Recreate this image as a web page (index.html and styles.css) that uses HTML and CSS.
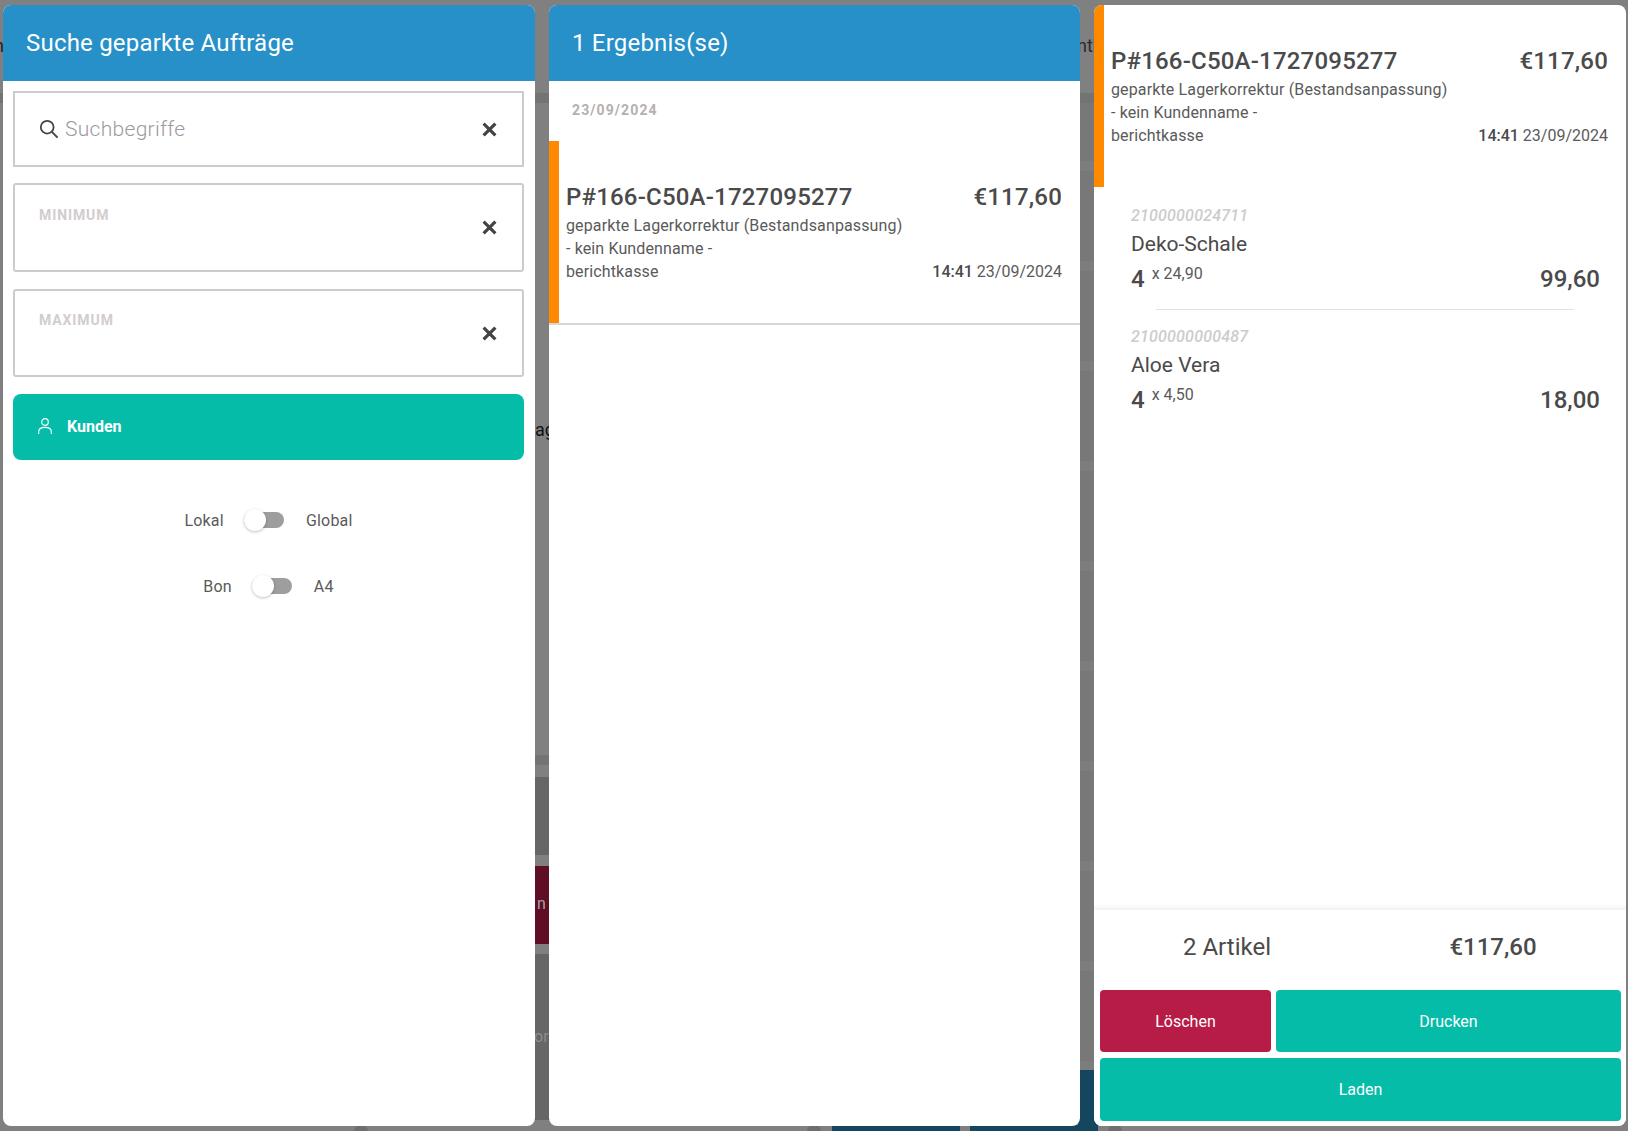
FILE: index.html
```html
<!DOCTYPE html>
<html lang="de">
<head>
<meta charset="utf-8">
<title>Suche geparkte Aufträge</title>
<link rel="stylesheet" href="styles.css">
</head>
<body>
<div class="backdrop">
  <div class="bd bd-gap2"></div>
  <div class="bd bd-band-top"></div>
  <div class="bd bd-band-a"></div>
  <div class="bd bd-dark-a"></div>
  <div class="bd bd-maroon"></div>
  <div class="bd bd-dark-b"></div>
  <div class="bd bd-teal-gap"></div>
  <div class="bd bd-teal-a"></div>
  <div class="bd bd-teal-b"></div>
  <div class="bd bd-nub-a"></div>
  <div class="bd bd-nub-b"></div>
  <div class="bd bd-nub-c"></div>
  <span class="bd-text bd-t-left">n</span>
  <span class="bd-text bd-t-ag">ag</span>
  <span class="bd-text bd-t-ntl">ntl</span>
  <span class="bd-text bd-t-n">n</span>
  <span class="bd-text bd-t-or">or</span>
</div>

<main class="panels">
  <section class="panel">
    <header class="panel-head">Suche geparkte Aufträge</header>
    <div class="search-body">
      <div class="field field-search">
        <svg class="ico-search" viewBox="0 0 20 20" width="20" height="20" aria-hidden="true"><circle cx="8.2" cy="8.2" r="6.4" fill="none" stroke="#444" stroke-width="1.8"/><path d="M12.9 12.9 18.6 18.6" stroke="#444" stroke-width="2" fill="none"/></svg>
        <span class="placeholder">Suchbegriffe</span>
        <svg class="ico-x" viewBox="0 0 14 14" width="15" height="15" aria-hidden="true"><path d="M1.5 1.5 12.5 12.5M12.5 1.5 1.5 12.5" stroke="#444" stroke-width="3" fill="none"/></svg>
      </div>
      <div class="field field-amount field-min">
        <span class="field-label">MINIMUM</span>
        <svg class="ico-x" viewBox="0 0 14 14" width="15" height="15" aria-hidden="true"><path d="M1.5 1.5 12.5 12.5M12.5 1.5 1.5 12.5" stroke="#444" stroke-width="3" fill="none"/></svg>
      </div>
      <div class="field field-amount field-max">
        <span class="field-label">MAXIMUM</span>
        <svg class="ico-x" viewBox="0 0 14 14" width="15" height="15" aria-hidden="true"><path d="M1.5 1.5 12.5 12.5M12.5 1.5 1.5 12.5" stroke="#444" stroke-width="3" fill="none"/></svg>
      </div>
      <button class="customer-btn" type="button">
        <svg viewBox="0 0 16 18" width="16" height="18" aria-hidden="true"><circle cx="8" cy="5" r="3.3" fill="none" stroke="#fff" stroke-width="1.2"/><path d="M1.6 17V15.2C1.6 12.2 4 10.4 8 10.4S14.4 12.2 14.4 15.2V17" fill="none" stroke="#fff" stroke-width="1.2"/></svg>
        <span>Kunden</span>
      </button>
      <div class="toggles">
        <div class="toggle-row toggle-row-a">
          <span>Lokal</span><span class="switch"><span class="knob"></span></span><span>Global</span>
        </div>
        <div class="toggle-row toggle-row-b">
          <span>Bon</span><span class="switch"><span class="knob"></span></span><span>A4</span>
        </div>
      </div>
    </div>
  </section>

  <section class="panel panel-results">
    <header class="panel-head">1 Ergebnis(se)</header>
    <div class="date-label">23/09/2024</div>
    <article class="order order-list">
      <div class="order-top"><span class="order-id">P#166-C50A-1727095277</span><span class="order-sum">€117,60</span></div>
      <div class="order-line order-first">geparkte Lagerkorrektur (Bestandsanpassung)</div>
      <div class="order-line">- kein Kundenname -</div>
      <div class="order-line order-bottom"><span>berichtkasse</span><span class="order-stamp"><b>14:41</b> 23/09/2024</span></div>
    </article>
  </section>

  <section class="panel panel-detail">
    <article class="order order-head">
      <div class="order-top"><span class="order-id">P#166-C50A-1727095277</span><span class="order-sum">€117,60</span></div>
      <div class="order-line order-first">geparkte Lagerkorrektur (Bestandsanpassung)</div>
      <div class="order-line">- kein Kundenname -</div>
      <div class="order-line order-bottom"><span>berichtkasse</span><span class="order-stamp"><b>14:41</b> 23/09/2024</span></div>
    </article>
    <div class="items">
      <div class="item item-first">
        <div class="item-code">2100000024711</div>
        <div class="item-name">Deko-Schale</div>
        <div class="item-row"><span class="item-qty">4</span><span class="item-price">x 24,90</span><span class="item-total">99,60</span></div>
      </div>
      <div class="item">
        <div class="item-code">2100000000487</div>
        <div class="item-name">Aloe Vera</div>
        <div class="item-row"><span class="item-qty">4</span><span class="item-price">x 4,50</span><span class="item-total">18,00</span></div>
      </div>
    </div>
    <footer class="detail-foot">
      <div class="foot-sum"><span class="foot-count">2 Artikel</span><span class="foot-total">€117,60</span></div>
      <div class="foot-actions">
        <button class="act act-del" type="button">Löschen</button>
        <button class="act act-print" type="button">Drucken</button>
        <button class="act act-load" type="button">Laden</button>
      </div>
    </footer>
  </section>
</main>
</body>
</html>
```
FILE: styles.css
```css
* { box-sizing: border-box; }
html, body { margin: 0; height: 100%; }
body {
  width: 1628px; height: 1131px; overflow: hidden; position: relative;
  background: #808080; color: #4a4a4a;
  font-family: Roboto, "Liberation Sans", sans-serif;
}

/* dimmed page behind the modal */
.backdrop { position: absolute; inset: 0; }
.bd { position: absolute; }
.bd-gap2 {
  left: 1078px; top: 103px; width: 18px; height: 967px; background-color: #787878;
  background-image: repeating-linear-gradient(180deg, #7d7d7d 0 10px, transparent 10px 100px);
  background-position: 0 58px; background-repeat: no-repeat;
}
.bd-band-top { left: 0; top: 93px; width: 1100px; height: 10px; background: #737373; }
.bd-band-a { left: 530px; top: 755px; width: 24px; height: 10px; background: #737373; }
.bd-dark-a { left: 530px; top: 777px; width: 24px; height: 78px; background: #666; }
.bd-maroon { left: 530px; top: 866px; width: 24px; height: 78px; background: #5f0e25; }
.bd-dark-b { left: 530px; top: 954px; width: 24px; height: 166px; background: #666; }
.bd-teal-gap { left: 1078px; top: 1070px; width: 20px; height: 61px; background: #14465f; }
.bd-teal-a { left: 832px; top: 1125px; width: 128px; height: 6px; background: #14465f; }
.bd-teal-b { left: 970px; top: 1125px; width: 110px; height: 6px; background: #14465f; }
.bd-nub-a { left: 354px; top: 1125px; width: 14px; height: 6px; background: #6e6e6e; border-radius: 7px 7px 0 0; }
.bd-nub-b { left: 807px; top: 1125px; width: 14px; height: 6px; background: #6e6e6e; border-radius: 7px 7px 0 0; }
.bd-nub-c { left: 1108px; top: 1125px; width: 14px; height: 6px; background: #6e6e6e; border-radius: 7px 7px 0 0; }
.bd-text { position: absolute; font-size: 18px; line-height: 22px; }
.bd-t-left { left: -6px; top: 35px; color: #222; }
.bd-t-ag { left: 535px; top: 419px; color: #111; }
.bd-t-ntl { left: 1077px; top: 35px; color: #2a2a33; }
.bd-t-n { left: 537px; top: 893px; font-size: 16px; color: #a6a0a2; }
.bd-t-or { left: 534px; top: 1026px; font-size: 16px; color: #8c8c8c; }

/* panels */
.panels {
  position: relative; display: flex; justify-content: space-between;
  height: 1131px; padding: 5px 2px 5px 3px;
}
.panel {
  width: 532px; height: 1121px; background: #fff; border-radius: 8px;
  display: flex; flex-direction: column; overflow: hidden;
}
.panel-results { width: 531px; }
.panel-head {
  height: 76px; flex: none; background: #2790c8; color: #fff;
  font-size: 24px; line-height: 28px; letter-spacing: .2px; padding: 24px 23px 0;
}

/* search form */
.search-body { padding: 10px 11px 0 10px; display: flex; flex-direction: column; }
.field {
  position: relative; display: flex; align-items: center; background: #fff;
  border: 2px solid #ccc; padding: 0 25px 0 24px;
}
.field-search { height: 76px; margin-bottom: 16px; }
.field-amount { border-radius: 3px; }
.field-min { height: 89px; margin-bottom: 17px; }
.field-max { height: 88px; margin-bottom: 17px; }
.ico-search { flex: none; margin-right: 6px; }
.placeholder { font-size: 21px; font-weight: 300; color: #9b9b9b; letter-spacing: .3px; }
.ico-x { margin-left: auto; flex: none; }
.field-label {
  position: absolute; left: 24px; font-size: 14px; font-weight: 700;
  letter-spacing: .9px; color: #d2cdcd; line-height: 16px;
}
.field-min .field-label { top: 22px; }
.field-max .field-label { top: 21px; }
.customer-btn {
  height: 66px; border: 0; border-radius: 8px; background: #04bca8; color: #fff;
  display: flex; align-items: center; gap: 14px; padding: 0 0 2px 24px;
  font: 700 16px Roboto, sans-serif;
}
.toggles { display: flex; flex-direction: column; }
.toggle-row {
  display: flex; align-items: center; justify-content: center; gap: 22px;
  font-size: 16px; letter-spacing: .2px; color: #5a5a5a; height: 24px;
}
.toggle-row-a { margin-top: 48px; }
.toggle-row-b { margin-top: 42px; }
.switch { position: relative; display: block; width: 40px; height: 16px; margin-left: -2px; background: #9e9e9e; border-radius: 8px; }
.knob {
  position: absolute; left: 0; top: -3px; width: 22px; height: 22px; border-radius: 50%;
  background: #fff; box-shadow: 0 1px 3px rgba(0,0,0,.25);
}

/* orders */
.date-label {
  flex: none; height: 60px; padding: 22px 0 0 23px; font-size: 14px; line-height: 15px;
  font-weight: 700; letter-spacing: 1.1px; color: #b5b0ae;
}
.order { border-left: 10px solid #ff8a00; display: flex; flex-direction: column; flex: none; }
.order-list { height: 182px; padding: 40px 18px 0 7px; box-shadow: 0 2px 0 #d8d8d8; }
.order-head { height: 182px; padding: 40px 18px 0 7px; }
.order-top { display: flex; justify-content: space-between; align-items: center; height: 32px; font-size: 24px; font-weight: 500; color: #4a4a4a; }
.order-id { letter-spacing: .2px; }
.order-sum { letter-spacing: .2px; }
.order-line { font-size: 16px; line-height: 23px; color: #5a5a5a; height: 23px; letter-spacing: .13px; }
.order-first { margin-top: 1px; }
.order-bottom { display: flex; justify-content: space-between; }
.order-stamp { letter-spacing: 0; }
.order-bottom b { font-weight: 500; color: #4a4a4a; }

/* line items */
.items { flex: 1; padding: 19px 26px 0 37px; }
.item { display: flex; flex-direction: column; }
.item-first { padding-bottom: 11px; margin-bottom: 17px; position: relative; }
.item-first::after {
  content: ""; position: absolute; left: 25px; right: 26px; bottom: 0; height: 1px; background: #e2e2e2;
}
.item-code { font-size: 16px; font-weight: 500; font-style: italic; color: #ccc; line-height: 20px; letter-spacing: .2px; }
.item-name { font-size: 21px; line-height: 26px; margin-top: 5px; color: #4a4a4a; }
.item-row { display: flex; align-items: flex-start; height: 40px; margin-top: 2px; }
.item-qty { font-size: 24px; font-weight: 500; line-height: 40px; margin-right: 7px; }
.item-price { font-size: 16px; line-height: 30px; color: #5a5a5a; }
.item-total { margin-left: auto; font-size: 24px; font-weight: 500; line-height: 40px; color: #4a4a4a; }

/* footer */
.detail-foot {
  flex: none; height: 216px; padding: 0 5px 5px 6px; background: #fff;
  box-shadow: 0 -2px 6px rgba(0,0,0,.08); display: flex; flex-direction: column;
}
.foot-sum { display: grid; grid-template-columns: 1fr 1fr; height: 81px; padding-bottom: 6px; margin: 0 -5px 0 -6px; align-items: center; text-align: center; font-size: 24px; }
.foot-count { font-weight: 400; }
.foot-total { font-weight: 500; }
.foot-actions { display: grid; grid-template-columns: 171px 1fr; gap: 6px 5px; }
.act { border: 0; border-radius: 4px; color: #fff; font: 400 16px Roboto, sans-serif; height: 62px; }
.act-del { background: #b71c46; }
.act-print { background: #04bca8; }
.act-load { background: #04bca8; grid-column: 1 / 3; height: 63px; }
```
